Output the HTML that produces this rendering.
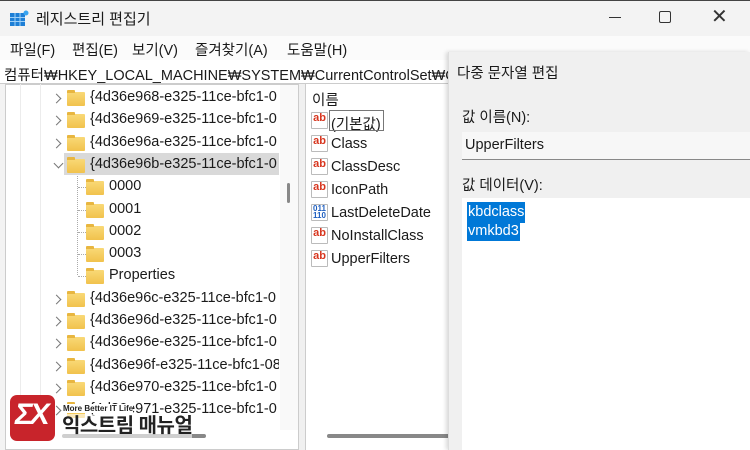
<!DOCTYPE html>
<html><head><meta charset="utf-8"><style>
*{margin:0;padding:0;box-sizing:border-box}
body{width:750px;height:450px;overflow:hidden;background:#f3f3f3;position:relative;font-family:"Liberation Sans","Noto Sans CJK KR",sans-serif;color:#1a1a1a}
.a{position:absolute;white-space:nowrap}
.t{font-size:14.5px}
.fold{position:absolute;width:18px;height:14px;background:linear-gradient(#f9d977,#f1c24c);border-radius:1px}
.fold:before{content:"";position:absolute;left:0;top:-2px;width:8px;height:3px;background:#e8b640;border-radius:1px 1px 0 0}
.chev{position:absolute;width:7px;height:7px;border-right:1.3px solid #777;border-bottom:1.3px solid #777;transform:rotate(-45deg)}
.ab{position:absolute;width:17px;height:17px;border:1px solid #bbb;background:#fff;border-radius:1px;color:#d7361f;font-weight:bold;font-size:11px;line-height:11px;text-align:center}
</style></head><body>
<div class="a" style="left:0;top:0;width:750px;height:36px;background:#f3f3f3;border-top:1px solid #444"></div>
<svg class="a" style="left:10px;top:10px" width="19" height="17"><rect x="0" y="3" width="15" height="13" fill="#1e7fd6"/><g stroke="#9fd0f7" stroke-width="1"><line x1="5" y1="3" x2="5" y2="16"/><line x1="10" y1="3" x2="10" y2="16"/><line x1="0" y1="7.5" x2="15" y2="7.5"/><line x1="0" y1="11.5" x2="15" y2="11.5"/></g><circle cx="16" cy="3" r="2.5" fill="#38a4f0"/></svg>
<div class="a" style="left:36px;top:8px;font-size:15px">레지스트리 편집기</div>
<div class="a" style="left:609px;top:17px;width:12px;height:1px;background:#333"></div>
<div class="a" style="left:659px;top:11px;width:12px;height:12px;border:1.3px solid #333;border-radius:2px"></div>
<div class="a" style="left:711px;top:4px;font-size:20px;color:#333">✕</div>
<div class="a" style="left:0;top:36px;width:750px;height:24px;background:#fbfbfb"></div>
<div class="a t" style="left:10px;top:39px">파일(F)</div>
<div class="a t" style="left:72px;top:39px">편집(E)</div>
<div class="a t" style="left:132px;top:39px">보기(V)</div>
<div class="a t" style="left:195px;top:39px">즐겨찾기(A)</div>
<div class="a t" style="left:287px;top:39px">도움말(H)</div>
<div class="a" style="left:0;top:60px;width:450px;height:24px;background:#fff;border-bottom:1px solid #ccc"></div>
<div class="a t" style="left:4px;top:64px">컴퓨터₩HKEY_LOCAL_MACHINE₩SYSTEM₩CurrentControlSet₩Contr</div>
<div class="a" style="left:5px;top:84px;width:294px;height:366px;background:#fff;border:1px solid #ccc"></div>
<div class="a" style="left:20px;top:84px;width:1px;height:345px;background:#ececec"></div>
<div class="a" style="left:40px;top:84px;width:1px;height:345px;background:#ececec"></div>
<div class="a" style="left:280px;top:85px;width:18px;height:345px;background:#f9f9f9"></div>
<div class="a" style="left:287px;top:183px;width:3px;height:20px;background:#888;border-radius:2px"></div>
<div class="a" style="left:64px;top:153px;width:215px;height:22px;background:#d9d9d9"></div>
<div class="a" style="left:77px;top:176px;width:0;height:99px;border-left:1px dotted #aaa"></div>
<div id="tree"></div>
<div class="a" style="left:299px;top:84px;width:6px;height:366px;background:#f0f0f0"></div>
<div class="a" style="left:305px;top:84px;width:145px;height:366px;background:#fff;border-left:1px solid #ccc"></div>
<div class="a t" style="left:312px;top:89px">이름</div>
<div id="list"></div>
<div class="a" style="left:329px;top:110px;width:55px;height:21px;border:1px solid #777"></div>
<div class="a" style="left:62px;top:434px;width:144px;height:4px;background:#888;border-radius:2px"></div>
<div class="a" style="left:327px;top:434px;width:123px;height:4px;background:#888;border-radius:2px"></div>
<div class="a" style="left:448px;top:52px;width:302px;height:398px;background:#f0f0f0;border-left:1px solid #ddd;box-shadow:-2px 0 4px rgba(0,0,0,.15)"></div>
<div class="a t" style="left:457px;top:62px">다중 문자열 편집</div>
<div class="a t" style="left:462px;top:106px">값 이름(N):</div>
<div class="a" style="left:462px;top:132px;width:288px;height:28px;background:#f7f7f7;border-bottom:1px solid #888"></div>
<div class="a t" style="left:465px;top:137px">UpperFilters</div>
<div class="a t" style="left:462px;top:174px">값 데이터(V):</div>
<div class="a" style="left:462px;top:198px;width:288px;height:252px;background:#fff"></div>
<div class="a t" style="left:467px;top:202px;background:#0078d7;color:#fff;padding:1px 1px;line-height:19px">kbdclass</div>
<div class="a t" style="left:467px;top:222px;background:#0078d7;color:#fff;padding:0 1px;line-height:19px">vmkbd3</div>
<div class="a" style="left:10px;top:395px;width:45px;height:46px;background:#c8242b;border-radius:7px"></div>
<div class="a" style="left:15px;top:398px;font-size:30px;font-weight:bold;color:#fff;font-style:italic;letter-spacing:-3px">ΣX</div>
<div class="a" style="left:63px;top:404px;font-size:8px;font-weight:bold;color:#222;background:#fff">More Better IT Life</div>
<div class="a" style="left:62px;top:414px;font-size:20px;font-weight:bold;color:#222;background:rgba(255,255,255,.6);line-height:25px;letter-spacing:-0.5px">익스트림 매뉴얼</div>
<script>
var rows=[["{4d36e968-e325-11ce-bfc1-0",0,">"],["{4d36e969-e325-11ce-bfc1-0",0,">"],["{4d36e96a-e325-11ce-bfc1-0",0,">"],["{4d36e96b-e325-11ce-bfc1-0",0,"v"],["0000",1],["0001",1],["0002",1],["0003",1],["Properties",1],["{4d36e96c-e325-11ce-bfc1-0",0,">"],["{4d36e96d-e325-11ce-bfc1-0",0,">"],["{4d36e96e-e325-11ce-bfc1-0",0,">"],["{4d36e96f-e325-11ce-bfc1-08",0,">"],["{4d36e970-e325-11ce-bfc1-0",0,">"],["{4d36e971-e325-11ce-bfc1-0",0,">"]];
var h="";rows.forEach(function(r,i){var y=89+i*22.3;var fx=r[1]?86:67,tx=r[1]?109:90;
if(r[2]==">")h+='<div class="chev" style="left:53px;top:'+(y+6)+'px"></div>';
if(r[2]=="v")h+='<div class="chev" style="left:55px;top:'+(y+4)+'px;transform:rotate(45deg)"></div>';
if(r[1])h+='<div class="a" style="left:78px;top:'+(y+9)+'px;width:8px;border-top:1px dotted #aaa"></div>';
h+='<div class="fold" style="left:'+fx+'px;top:'+(y+3)+'px"></div><div class="a t" style="left:'+tx+'px;top:'+y+'px;max-width:'+(279-tx)+'px;overflow:hidden">'+r[0]+'</div>';});
document.getElementById("tree").innerHTML=h;
var l=["(기본값)","Class","ClassDesc","IconPath","LastDeleteDate","NoInstallClass","UpperFilters"];h="";
l.forEach(function(n,i){var y=112+i*23;var bin=n=="LastDeleteDate";
h+='<div class="ab" style="left:311px;top:'+y+'px;'+(bin?'color:#1f5fbf;font-size:8px;line-height:7px':'')+'">'+(bin?'011<br>110':'ab')+'</div><div class="a t" style="left:331px;top:'+(y+1)+'px">'+n+'</div>';});
document.getElementById("list").innerHTML=h;
</script>
</body></html>
